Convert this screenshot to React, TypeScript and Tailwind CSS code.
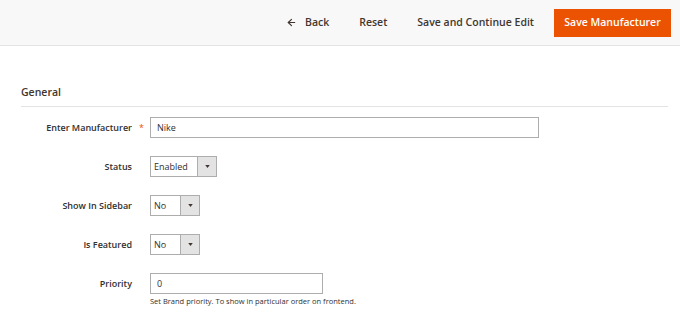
import { ArrowLeft } from 'lucide-react'

function SelectBox({ value, width, textWidth }: { value: string; width: string; textWidth: string }) {
  return (
    <div className={`flex h-[21px] ${width} border border-[#adadad] bg-white`}>
      <span className={`${textWidth} flex items-center pl-[3px] text-[9px] text-[#303030]`}>{value}</span>
      <span className="flex flex-1 items-center justify-center border-l border-[#adadad] bg-[#e3e3e3]">
        <svg width="5" height="3" viewBox="0 0 6 4">
          <path d="M0 0 L6 0 L3 4 Z" fill="#41362f" />
        </svg>
      </span>
    </div>
  )
}

function Row({ label, required, children }: { label: string; required?: boolean; children: React.ReactNode }) {
  return (
    <div className="flex items-start">
      <div className="flex h-[21px] w-[150px] items-center">
        <span className="w-[132px] text-right text-[9px] font-semibold text-[#303030]">{label}</span>
        {required && <span className="ml-[7px] text-[9px] text-[#eb5202]">*</span>}
      </div>
      <div>{children}</div>
    </div>
  )
}

export default function App() {
  return (
    <div className="h-[321px] w-[680px] overflow-hidden bg-white" style={{ fontFamily: '"Open Sans", sans-serif' }}>
      <div className="flex h-[46px] items-center justify-end border-b border-[#e3e3e3] bg-[#f8f8f8] pr-[9px]">
        <button className="mr-[30px] flex items-center text-[10.5px] font-semibold text-[#41362f]">
          <ArrowLeft size={11} strokeWidth={2.5} className="mr-[8px]" />
          Back
        </button>
        <button className="mr-[30px] text-[10.5px] font-semibold text-[#41362f]">Reset</button>
        <button className="mr-[20px] text-[10.5px] font-semibold text-[#41362f]">Save and Continue Edit</button>
        <button className="h-[28px] w-[117px] border border-[#eb5202] bg-[#eb5202] text-[10.5px] font-semibold text-white">
          Save Manufacturer
        </button>
      </div>

      <div className="pl-[21px] pr-[12px] pt-[39px]">
        <h2 className="border-b border-[#e3e3e3] pb-[5px] text-[10.5px] font-semibold text-[#41362f]">General</h2>
      </div>

      <div className="flex flex-col gap-[18px] pt-[10px]">
        <Row label="Enter Manufacturer" required>
          <div className="flex h-[21px] w-[389px] items-center border border-[#adadad] bg-white pl-[6px] text-[9px] text-[#303030]">
            Nike
          </div>
        </Row>
        <Row label="Status">
          <SelectBox value="Enabled" width="w-[67px]" textWidth="w-[46px]" />
        </Row>
        <Row label="Show In Sidebar">
          <SelectBox value="No" width="w-[50px]" textWidth="w-[29px]" />
        </Row>
        <Row label="Is Featured">
          <SelectBox value="No" width="w-[50px]" textWidth="w-[29px]" />
        </Row>
        <Row label="Priority">
          <div className="flex h-[21px] w-[173px] items-center border border-[#adadad] bg-white pl-[6px] text-[9px] text-[#303030]">
            0
          </div>
          <p className="mt-[2px] text-[7.5px] text-[#303030]">Set Brand priority. To show in particular order on frontend.</p>
        </Row>
      </div>
    </div>
  )
}
